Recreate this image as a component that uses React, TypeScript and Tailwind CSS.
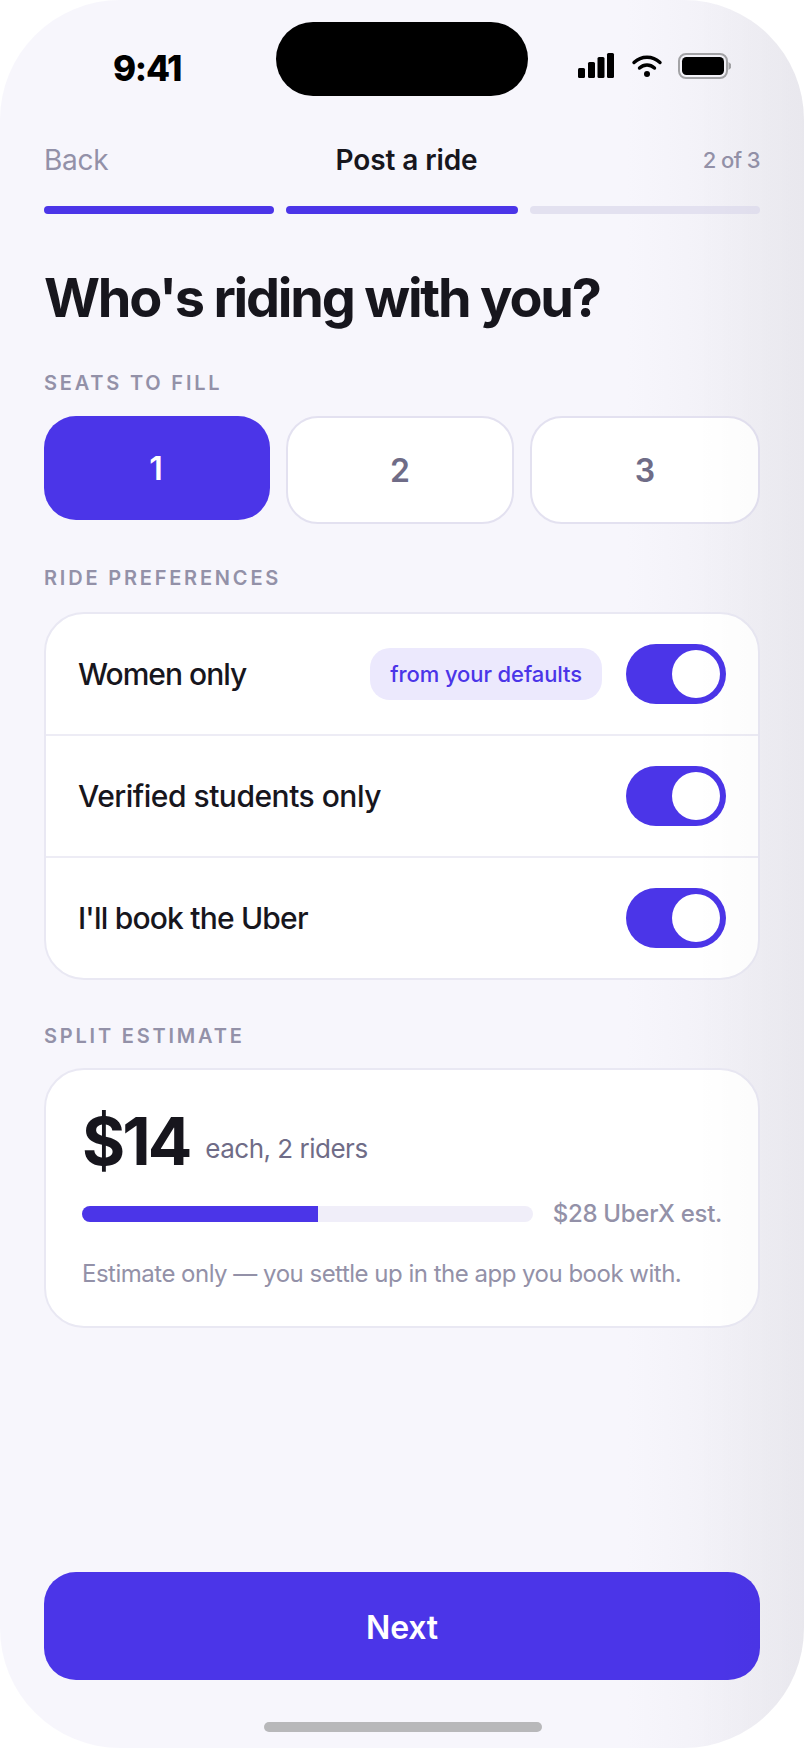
import React from "react";

function Toggle() {
  return (
    <div className="flex h-[60px] w-[100px] shrink-0 items-center justify-end rounded-full bg-[#4b35e8] pr-[6px]">
      <div className="h-[48px] w-[48px] rounded-full bg-white" />
    </div>
  );
}

function Row({ label, pill, rowClass, textClass }: { label: string; pill?: boolean; rowClass: string; textClass: string }) {
  return (
    <div className={`flex items-center px-[32px] ${rowClass}`}>
      <span className={`flex-1 text-[30px] font-medium text-[#17161d] ${textClass}`}>{label}</span>
      {pill && (
        <span className="mr-[24px] flex h-[52px] items-center rounded-[20px] bg-[#ece9fd] px-[20px] text-[22px] font-medium tracking-[-0.1px] text-[#4b35e8]">
          from your defaults
        </span>
      )}
      <Toggle />
    </div>
  );
}

function Label({ children }: { children: React.ReactNode }) {
  return <div className="text-[20px] font-semibold leading-[24px] tracking-[2.8px] text-[#9391a8]">{children}</div>;
}

export default function App() {
  return (
    <div className="h-[1748px] w-[804px] bg-white font-['Inter',sans-serif]">
      <div className="relative flex h-full w-full flex-col overflow-hidden rounded-[120px] bg-[linear-gradient(to_right,#f7f6fc_78%,#eeedf3)]">
        {/* status bar */}
        <div className="flex h-[140px] shrink-0 items-start justify-between pl-[113px] pr-[73px] pt-[49px]">
          <span className="text-[35px] font-extrabold leading-[38px] tracking-[-1.3px] text-black">9:41</span>
          <svg width="153" height="28" viewBox="0 0 153 28" className="mt-[4px]">
            <g fill="#000">
              <rect x="0" y="15" width="7" height="10" rx="1.5" />
              <rect x="10" y="9" width="7" height="16" rx="1.5" />
              <rect x="19.5" y="4" width="7" height="21" rx="1.5" />
              <rect x="29" y="0" width="7" height="25" rx="1.5" />
              <circle cx="69" cy="21" r="3" />
            </g>
            <path d="M56 9.5 C63.5 2.5 74.5 2.5 82 9.5" fill="none" stroke="#000" strokeWidth="3.4" strokeLinecap="round" />
            <path d="M61.5 15 C66 11 72 11 76.5 15" fill="none" stroke="#000" strokeWidth="3.4" strokeLinecap="round" />
            <rect x="101" y="1" width="48" height="24" rx="7" fill="none" stroke="#a3a3a6" strokeWidth="2" />
            <rect x="104" y="4" width="42" height="18" rx="4.5" fill="#000" />
            <path d="M150.5 9 L153 11 V15 L150.5 17 Z" fill="#a3a3a6" />
          </svg>
        </div>
        <div className="absolute left-[276px] top-[22px] h-[74px] w-[252px] rounded-[37px] bg-black" />

        {/* content */}
        <div className="flex flex-1 flex-col px-[44px]">
          <div className="flex h-[40px] items-center justify-between">
            <span className="w-[130px] text-[28px] font-normal tracking-[-0.3px] text-[#9391a8]">Back</span>
            <span className="ml-[9px] text-[28px] font-semibold tracking-[-0.1px] text-[#17161d]">Post a ride</span>
            <span className="w-[130px] text-right text-[22px] font-medium tracking-[-0.6px] text-[#9391a8]">2 of 3</span>
          </div>

          <div className="mt-[26px] flex gap-[12px]">
            <div className="h-[8px] w-[230px] rounded-full bg-[#4b35e8]" />
            <div className="h-[8px] w-[232px] rounded-full bg-[#4b35e8]" />
            <div className="h-[8px] w-[230px] rounded-full bg-[#e3e1f0]" />
          </div>

          <h1 className="mt-[50px] text-[54px] font-bold leading-[68px] tracking-[-2.2px] text-[#17161d]">Who's riding with you?</h1>

          <div className="mt-[39px]"><Label>SEATS TO FILL</Label></div>

          <div className="mt-[21px] flex items-start gap-[16px]">
            <div className="flex h-[104px] w-[226px] items-center justify-center rounded-[32px] bg-[#4b35e8] pr-[2px] pt-[1px] text-[32px] font-semibold text-white">1</div>
            <div className="flex h-[108px] w-[228px] items-center justify-center rounded-[32px] border-2 border-[#e3e1f0] bg-white pt-[2px] text-[32px] font-semibold text-[#6f6c87]">2</div>
            <div className="flex h-[108px] w-[230px] items-center justify-center rounded-[32px] border-2 border-[#e3e1f0] bg-white pt-[2px] text-[32px] font-semibold text-[#6f6c87]">3</div>
          </div>

          <div className="mt-[42px]"><Label>RIDE PREFERENCES</Label></div>

          <div className="mt-[22px] overflow-hidden rounded-[40px] border-2 border-[#e9e8f3] bg-white">
            <Row label="Women only" pill rowClass="h-[120px] border-b-2 border-[#edecf5] box-content" textClass="tracking-[-1px]" />
            <Row label="Verified students only" rowClass="h-[120px] border-b-2 border-[#edecf5] box-content" textClass="tracking-[-0.5px]" />
            <Row label="I'll book the Uber" rowClass="h-[120px]" textClass="tracking-[-0.8px]" />
          </div>

          <div className="mt-[44px]"><Label>SPLIT ESTIMATE</Label></div>

          <div className="mt-[20px] rounded-[40px] border-2 border-[#e9e8f3] bg-white pb-[34px] pl-[36px] pr-[36px] pt-[30px]">
            <div className="flex items-center gap-[16px]">
              <span className="text-[66px] font-bold leading-[82px] tracking-[-3px] text-[#17161d]">$14</span>
              <span className="mt-[14px] text-[26px] font-normal tracking-[-0.5px] text-[#6f6c87]">each, 2 riders</span>
            </div>
            <div className="mt-[14px] flex items-center gap-[20px]">
              <div className="h-[16px] w-[452px] overflow-hidden rounded-full bg-[#f0eef9]">
                <div className="h-full w-[236px] bg-[#4b35e8]" />
              </div>
              <span className="whitespace-nowrap text-[24px] font-medium tracking-[-0.3px] text-[#9391a8]">$28 UberX est.</span>
            </div>
            <div className="mt-[24px] whitespace-nowrap text-[24px] leading-[36px] tracking-[-0.5px] text-[#9391a8]">
              Estimate only — you settle up in the app you book with.
            </div>
          </div>
        </div>

        {/* cta */}
        <div className="mx-[44px] flex h-[108px] shrink-0 items-center justify-center rounded-[32px] bg-[#4b35e8] pt-[3px] text-[32px] font-semibold tracking-[-0.2px] text-white">
          Next
        </div>
        <div className="mb-[16px] ml-[264px] mt-[42px] h-[10px] w-[278px] shrink-0 rounded-full bg-[#b8b8ba]" />

        {/* edge shading */}
        <div className="pointer-events-none absolute inset-y-0 right-0 w-[110px] bg-gradient-to-r from-transparent to-[#00000006]" />
      </div>
    </div>
  );
}
